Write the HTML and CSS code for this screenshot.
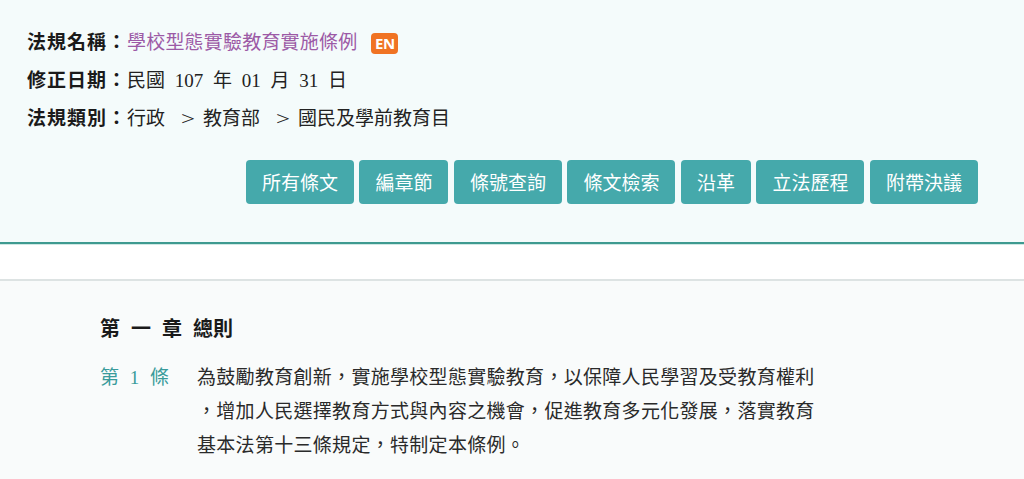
FILE: index.html
```html
<!DOCTYPE html>
<html lang="zh-Hant">
<head>
<meta charset="utf-8">
<title>學校型態實驗教育實施條例</title>
<link rel="stylesheet" href="styles.css">
</head>
<body>
<header class="law-header">
  <div class="info-row"><span class="label">法規名稱：</span><a class="law-name" href="#">學校型態實驗教育實施條例</a><span class="en-badge">EN</span></div>
  <div class="info-row"><span class="label">修正日期：</span><span class="value spaced">民國 107 年 01 月 31 日</span></div>
  <div class="info-row"><span class="label">法規類別：</span><span class="value crumbs">行政<span class="sep">&gt;</span>教育部<span class="sep">&gt;</span>國民及學前教育目</span></div>
  <nav class="btn-bar">
    <a class="btn" href="#">所有條文</a>
    <a class="btn" href="#">編章節</a>
    <a class="btn" href="#">條號查詢</a>
    <a class="btn" href="#">條文檢索</a>
    <a class="btn" href="#">沿革</a>
    <a class="btn" href="#">立法歷程</a>
    <a class="btn" href="#">附帶決議</a>
  </nav>
</header>
<div class="spacer"></div>
<main class="content">
  <h2 class="chapter">第 一 章 總則</h2>
  <div class="article">
    <div class="art-no">第 1 條</div>
    <div class="art-text">為鼓勵教育創新，實施學校型態實驗教育，以保障人民學習及受教育權利<br>，增加人民選擇教育方式與內容之機會，促進教育多元化發展，落實教育<br>基本法第十三條規定，特制定本條例。</div>
  </div>
</main>
</body>
</html>
```
FILE: styles.css
```css
html, body {
  margin: 0;
  padding: 0;
}
body {
  background: #f9fbfb;
  font-family: "Liberation Serif", "Noto Sans CJK TC", serif;
  color: #222;
  width: 1024px;
  height: 479px;
  overflow: hidden;
}
.law-header {
  background: #f4fbfb;
  padding: 24px 46px 38px 27px;
  border-bottom: 2px solid #3e9a90;
  box-shadow: 0 1px 0 #cfe8e4;
}
.info-row {
  font-size: 19px;
  line-height: 38px;
  height: 38px;
  display: flex;
  align-items: center;
  white-space: pre;
}
.label {
  font-weight: bold;
  color: #1a1a1a;
  letter-spacing: 1px;
}
.value {
  color: #222;
}
.spaced {
  word-spacing: 5px;
}
.crumbs .sep {
  display: inline-block;
  width: 14px;
  margin: 0 8px 0 16px;
  text-align: center;
  transform: scaleX(1.3);
}
.law-name {
  color: #9c5aa6;
  text-decoration: none;
  letter-spacing: 0.2px;
}
.en-badge {
  display: inline-block;
  margin-left: 14px;
  background: #f07323;
  color: #fff;
  font-family: "Open Sans", "Noto Sans", sans-serif;
  font-weight: bold;
  font-size: 15px;
  line-height: 21px;
  height: 21px;
  width: 27px;
  text-align: center;
  border-radius: 4px;
  letter-spacing: -0.5px;
}
.btn-bar {
  display: flex;
  justify-content: flex-end;
  gap: 5.5px;
  margin-top: 22px;
}
.btn {
  display: block;
  background: #45a9ab;
  color: #fff;
  text-decoration: none;
  font-family: "Noto Sans CJK TC", sans-serif;
  font-size: 19px;
  line-height: 44px;
  height: 44px;
  padding: 0 16px;
  border-radius: 4px;
}
.spacer {
  height: 34px;
  background: #fff;
  border-bottom: 2px solid #dde3e3;
  margin-top: 1px;
}
.content {
  padding: 28px 0 0 100px;
}
.chapter {
  margin: 0;
  font-size: 20px;
  font-weight: bold;
  line-height: 40px;
  color: #1a1a1a;
  white-space: pre;
  word-spacing: 6px;
}
.article {
  display: flex;
  margin-top: 12px;
}
.art-no {
  width: 97px;
  color: #3a9b9b;
  font-size: 19px;
  line-height: 34px;
  white-space: pre;
  word-spacing: 6px;
}
.art-text {
  font-size: 19px;
  letter-spacing: 0.3px;
  line-height: 34px;
  color: #2a2a2a;
}
```
